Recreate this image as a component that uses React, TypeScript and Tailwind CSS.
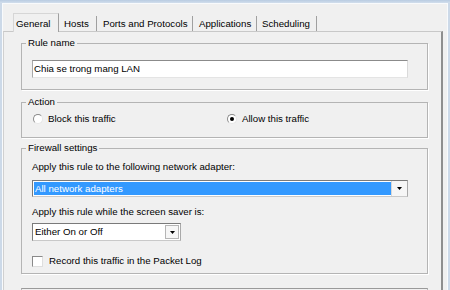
import React from "react";

function Arrow() {
  return (
    <svg width="5" height="3" viewBox="0 0 5 3">
      <path d="M0 0h5L2.5 3z" fill="#000" />
    </svg>
  );
}

function Radio({ checked }: { checked?: boolean }) {
  return (
    <span className="w-[10px] h-[10px] shrink-0 rounded-full bg-white border border-[#8a8a8a] border-r-[#e6e6e6] border-b-[#e6e6e6] flex items-center justify-center">
      {checked ? <span className="w-[4px] h-[4px] rounded-full bg-black" /> : null}
    </span>
  );
}

function Group({
  label,
  className,
  children,
}: {
  label: string;
  className: string;
  children: React.ReactNode;
}) {
  return (
    <fieldset
      className={
        "ml-[17px] mr-[13px] border border-[#b4b4b4] shadow-[1px_1px_0_#ffffff] " +
        className
      }
    >
      <legend className="ml-[4px] px-[2px] leading-[12px]">{label}</legend>
      {children}
    </fieldset>
  );
}

export default function App() {
  const tabs = [
    { name: "Hosts", w: "w-[38px]", pl: "pl-[5px]" },
    { name: "Ports and Protocols", w: "w-[96px]", pl: "pl-[6px]" },
    { name: "Applications", w: "w-[64px]", pl: "pl-[6px]" },
    { name: "Scheduling", w: "w-[60px]", pl: "pl-[5px]" },
  ];
  return (
    <div className="w-[450px] h-[290px] overflow-hidden flex flex-col bg-[#c9d8ea] font-['Liberation_Sans',Arial,sans-serif] text-[9.7px] leading-[12px] text-black">
      <div className="h-[3px] shrink-0 bg-gradient-to-b from-[#b9cce2] to-[#d2deec]" />
      <div className="flex flex-1 min-h-0">
        <div className="w-[2px] shrink-0 bg-[#ccd9e8]" />
        <div className="flex-1 min-w-0 flex flex-col bg-[#f0f0f0] border-t border-l border-r border-[#f8fafc]">
          {/* Tabs */}
          <div className="relative z-10 flex items-end h-[19px] mt-[9px] ml-[10px] -mb-px">
            <div className="w-[46px] h-[19px] pl-[2px] pt-[4px] bg-[#f0f0f0] border-l border-t border-r border-l-[#d6d6d6] border-t-[#d6d6d6] border-r-[#a0a0a0] whitespace-nowrap">
              General
            </div>
            {tabs.map((t) => (
              <div
                key={t.name}
                className={
                  "h-[15px] mb-[1px] pt-[2px] border-r border-[#a0a0a0] whitespace-nowrap " +
                  t.w +
                  " " +
                  t.pl
                }
              >
                {t.name}
              </div>
            ))}
          </div>
          {/* Panel */}
          <div className="flex-1 mr-[4px] flex flex-col border-l border-t border-r-2 border-l-[#d0d0d0] border-t-[#c8c8c8] border-r-[#8e8e8e]">
            <Group label="Rule name" className="mt-[5px]">
              <div className="pl-[10px] pr-[19px] pt-[11px] pb-[11px]">
                <div className="h-[18px] bg-white border border-t-[#8b8b8b] border-l-[#a8a8a8] border-r-[#dadada] border-b-[#e4e4e4] pl-[1px] flex items-center whitespace-nowrap">
                  Chia se trong mang LAN
                </div>
              </div>
            </Group>

            <Group label="Action" className="mt-[6px]">
              <div className="pl-[11px] pt-[5px] pb-[12px] flex items-center h-[29px]">
                <div className="w-[194px] flex items-center gap-[5px]">
                  <Radio />
                  <span>Block this traffic</span>
                </div>
                <div className="flex items-center gap-[5px]">
                  <Radio checked />
                  <span>Allow this traffic</span>
                </div>
              </div>
            </Group>

            <Group label="Firewall settings" className="mt-[4px]">
              <div className="pl-[10px] pr-[19px] pt-[7px] pb-[6px]">
                <div className="h-[12px] whitespace-nowrap">
                  Apply this rule to the following network adapter:
                </div>
                <div className="mt-[7px] h-[17px] flex border border-[#7a7a7a] border-r-[#a9a9a9] border-b-[#c9c9c9] bg-white">
                  <div className="flex-1 ml-[1px] my-[1px] bg-[#3399ff] text-white pl-[1px] flex items-center whitespace-nowrap">
                    All network adapters
                  </div>
                  <div className="w-[16px] flex items-center justify-center bg-[#f6f6f6] border-l border-[#d8d8d8]">
                    <Arrow />
                  </div>
                </div>
                <div className="mt-[9px] h-[12px] whitespace-nowrap">
                  Apply this rule while the screen saver is:
                </div>
                <div className="mt-[5px] w-[149px] h-[18px] flex border border-[#7a7a7a] border-r-[#a9a9a9] border-b-[#c9c9c9] bg-white">
                  <div className="flex-1 pl-[2px] flex items-center whitespace-nowrap">
                    Either On or Off
                  </div>
                  <div className="w-[14px] my-[1px] mr-[1px] flex items-center justify-center bg-[#f6f6f6] border border-[#b5b5b5]">
                    <Arrow />
                  </div>
                </div>
                <div className="mt-[14px] h-[12px] flex items-center gap-[6px]">
                  <span className="w-[11px] h-[11px] shrink-0 bg-white border border-[#8a8a8a] border-r-[#dedede] border-b-[#dedede]" />
                  <span className="whitespace-nowrap">
                    Record this traffic in the Packet Log
                  </span>
                </div>
              </div>
            </Group>

            <div className="mt-[14px] ml-[17px] mr-[13px] h-[10px] shrink-0 border-t border-l border-r border-[#9a9a9a] border-l-[#b4b4b4] border-r-[#b4b4b4]" />
          </div>
        </div>
        <div className="w-[2px] shrink-0 bg-[#ccd9e8]" />
      </div>
    </div>
  );
}
